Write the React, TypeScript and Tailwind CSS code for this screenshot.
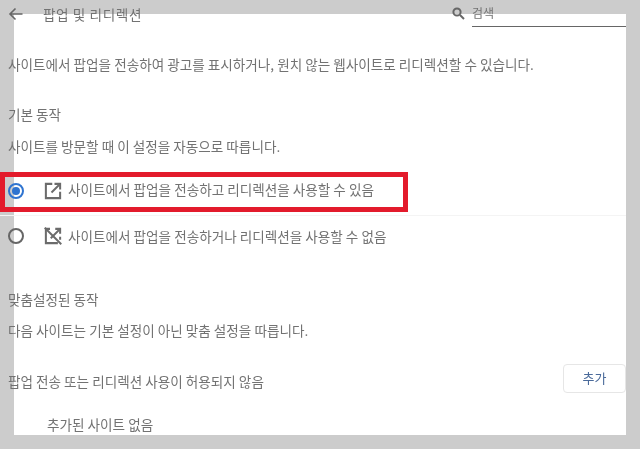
import React from "react";

const font = { fontFamily: '"Noto Sans CJK KR", "Noto Sans", sans-serif' };

function OpenIcon() {
  return (
    <svg width="18" height="18" viewBox="0 0 24 24" fill="none" stroke="#6b6b6b" strokeWidth="2.7">
      <path d="M11 2.5H2.5v19h19V13" />
      <path d="M14 2.5h7.5V10" />
      <path d="M21 3 10 14" />
    </svg>
  );
}

function BlockedIcon() {
  return (
    <svg width="18" height="18" viewBox="0 0 24 24" fill="none" stroke="#6b6b6b" strokeWidth="2.7">
      <path d="M8 2.5H2.5v19h16" />
      <path d="M15 2.5h6.5V9" />
      <path d="M1 1l22 22" />
      <path d="M21 3 9 15" />
      <path d="M21.5 13v4" />
    </svg>
  );
}

export default function App() {
  return (
    <div className="h-[449px] w-[640px] overflow-hidden bg-[#cccccc] p-[14px] blur-[0.4px]" style={font}>
      <div className="flex h-[421px] w-[612px] bg-white">
        <div className="-ml-[14px] -mt-[14px] flex h-[449px] w-[640px] shrink-0 flex-col overflow-hidden text-[13.6px] text-[#727272]">
          <header className="flex h-[27px] shrink-0 items-start pl-[8px] pr-[14px]">
            <svg className="mt-[7px]" width="15" height="14" viewBox="0 0 15 14" fill="none" stroke="#666666" strokeWidth="1.6">
              <path d="M14.5 7H2M7.5 1.5 2 7l5.5 5.5" />
            </svg>
            <span className="ml-[20px] mt-[4px] text-[13.6px] leading-[20px] tracking-[0.6px]">팝업 및 리디렉션</span>
            <div className="ml-auto mt-[7px]">
              <svg width="13" height="13" viewBox="0 0 13 13" fill="none" stroke="#666666" strokeWidth="2">
                <circle cx="5" cy="5" r="3.6" />
                <path d="m8 8 4 4" />
              </svg>
            </div>
            <div className="ml-[7px] h-[27px] w-[154px] border-b border-[#666666] text-[12px] leading-[25px]">
              검색
            </div>
          </header>

          <p className="mt-[27px] pl-[8px] leading-[20px] whitespace-nowrap">
            사이트에서 팝업을 전송하여 광고를 표시하거나, 원치 않는 웹사이트로 리디렉션할 수 있습니다.
          </p>
          <h2 className="mt-[30px] pl-[8px] leading-[20px]">기본 동작</h2>
          <p className="mt-[12px] pl-[8px] leading-[20px]">사이트를 방문할 때 이 설정을 자동으로 따릅니다.</p>

          <div className="mt-[16px] flex h-[40px] w-[408px] items-center border-[5px] border-[#e31b2c] pl-[3px] pb-[3px]">
            <span className="flex h-[16px] w-[16px] items-center justify-center rounded-full border-2 border-[#2f74d0]">
              <span className="h-[8px] w-[8px] rounded-full bg-[#2f74d0]" />
            </span>
            <span className="ml-[20px] flex"><OpenIcon /></span>
            <span className="ml-[6px] whitespace-nowrap pb-[3px]">사이트에서 팝업을 전송하고 리디렉션을 사용할 수 있음</span>
          </div>
          <div className="mt-[3px] flex h-[41px] w-[626px] items-center border-t border-[#f4f4f4] pl-[8px]">
            <span className="h-[16px] w-[16px] rounded-full border-2 border-[#666666]" />
            <span className="ml-[20px] flex"><BlockedIcon /></span>
            <span className="ml-[6px] whitespace-nowrap">사이트에서 팝업을 전송하거나 리디렉션을 사용할 수 없음</span>
          </div>

          <h2 className="mt-[33px] pl-[8px] leading-[20px]">맞춤설정된 동작</h2>
          <p className="mt-[11px] pl-[8px] leading-[20px]">다음 사이트는 기본 설정이 아닌 맞춤 설정을 따릅니다.</p>

          <div className="mt-[24px] flex h-[29px] w-[626px] items-center justify-between pl-[8px]">
            <span className="mt-[6px]">팝업 전송 또는 리디렉션 사용이 허용되지 않음</span>
            <button className="h-[29px] w-[63px] rounded-[4px] border border-[#e6e6e6] bg-white pb-[2px] text-[13px] text-[#4a6a9a]">
              추가
            </button>
          </div>

          <p className="mt-[21px] pl-[47px] leading-[20px]">추가된 사이트 없음</p>
        </div>
      </div>
    </div>
  );
}
